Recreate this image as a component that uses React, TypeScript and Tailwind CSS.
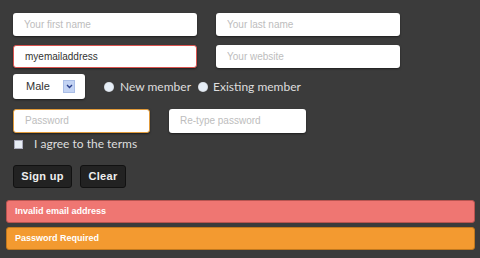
import React from "react";

const inp =
  "h-full w-full rounded-[3px] bg-white pl-[11px] pr-[10px] text-[10px] text-[#333] outline-none placeholder:text-[#bdbdbd] shadow-[0_1px_2px_rgba(0,0,0,0.5)]";
const ff = { fontFamily: '"Liberation Sans", Arial, sans-serif' };
const lf = { fontFamily: 'Lato, "Open Sans", sans-serif' };

export default function App() {
  return (
    <div className="h-[258px] w-[480px] overflow-hidden bg-[#3b3b3b]" style={ff}>
      <div className="flex flex-col pl-[13px] pt-[11px]">
        <div className="flex h-[23px] gap-[19px]">
          <div className="w-[184px]"><input className={inp} placeholder="Your first name" /></div>
          <div className="w-[184px]"><input className={inp} placeholder="Your last name" /></div>
        </div>
        <div className="mt-[9px] flex h-[23px] gap-[19px]">
          <div className="w-[184px]">
            <input className={inp + " border border-[#d9534f] pl-[10px] shadow-[0_0_2px_rgba(230,90,90,0.8)]"} defaultValue="myemailaddress" />
          </div>
          <div className="w-[184px]"><input className={inp} placeholder="Your website" /></div>
        </div>
        <div className="mt-[8px] flex h-[25px] items-center">
          <div className="flex h-full w-[72px] items-center justify-between rounded-[3px] bg-white pl-[13px] pr-[10px] text-[11px] text-[#333] shadow-[0_1px_2px_rgba(0,0,0,0.5)]">
            <span>Male</span>
            <span className="flex h-[13px] w-[12px] items-center justify-center bg-[#c3d3f3] border border-[#a9bde6]">
              <svg width="7" height="5" viewBox="0 0 7 5"><path d="M1 1 L3.5 3.5 L6 1" stroke="#2a3f8a" strokeWidth="1.4" fill="none" /></svg>
            </span>
          </div>
          <div className="ml-[19px] flex items-center text-[12px] font-normal text-[#dedede]" style={lf}>
            <span className="mr-[6px] h-[10px] w-[10px] rounded-full bg-[#e6eef7] shadow-[inset_0_0_1px_#999]" />
            <span>New member</span>
            <span className="ml-[7px] mr-[5px] h-[10px] w-[10px] rounded-full bg-[#e6eef7] shadow-[inset_0_0_1px_#999]" />
            <span>Existing member</span>
          </div>
        </div>
        <div className="mt-[8px] flex h-[24px] gap-[19px]">
          <div className="w-[137px]">
            <input className={inp + " border border-[#e09a3a] pl-[10px] shadow-[0_0_3px_rgba(240,160,60,0.9)]"} placeholder="Password" />
          </div>
          <div className="w-[137px]"><input className={inp} placeholder="Re-type password" /></div>
        </div>
        <div className="mt-[8px] flex h-[10px] items-center text-[12px] font-normal text-[#dedede]" style={lf}>
          <span className="ml-[1px] h-[9px] w-[9px] bg-[#e8eef5] border border-[#aab]" />
          <span className="ml-[11px]">I agree to the terms</span>
        </div>
        <div className="mt-[16px] flex h-[23px] gap-[8px]">
          <button className="w-[59px] rounded-[3px] border border-[#111] bg-[#222] text-[11px] font-bold tracking-[0.3px] text-[#eee]">Sign up</button>
          <button className="w-[46px] rounded-[3px] border border-[#111] bg-[#222] text-[11px] font-bold tracking-[0.3px] text-[#eee]">Clear</button>
        </div>
      </div>
      <div className="mt-[12px] flex flex-col gap-[4px] pl-[6px]">
        <div className="flex h-[23px] w-[469px] items-center rounded-[3px] border border-[#b85450] bg-[#ef7672] pl-[8px] text-[9px] font-bold text-white">Invalid email address</div>
        <div className="flex h-[23px] w-[469px] items-center rounded-[3px] border border-[#c0781e] bg-[#f39a30] pl-[8px] text-[9px] font-bold text-white">Password Required</div>
      </div>
    </div>
  );
}
